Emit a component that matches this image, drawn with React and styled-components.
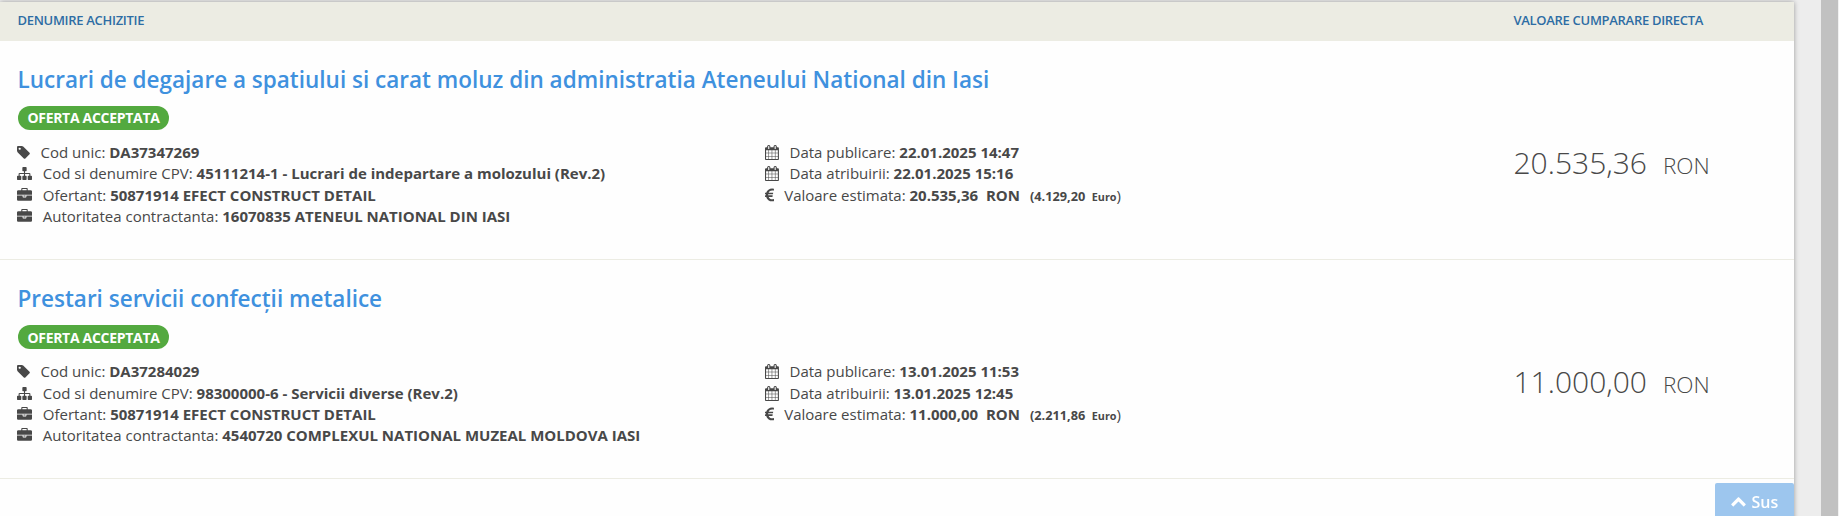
import React from "react";
import styled, { createGlobalStyle } from "styled-components";

const GlobalStyle = createGlobalStyle`
  html, body { margin: 0; height: 516px; overflow: hidden; }
  body {
    font-family: "Open Sans", "Noto Sans", sans-serif;
    font-size: 15px;
    line-height: 21.43px;
    color: #484848;
    background: #ededed;
  }
  * { box-sizing: border-box; }
`;

const Page = styled.div`
  display: flex;
  justify-content: space-between;
  height: 516px;
  padding-top: 2px;
  background: #ededed;
  overflow: hidden;
`;

const Panel = styled.main`
  width: 1794px;
  height: 520px;
  background: #fefefe;
  box-shadow: 0 0 5px rgba(0, 0, 0, 0.35);
`;

const ScrollTrack = styled.div`
  width: 18px;
  height: 516px;
  margin-top: -2px;
  padding-right: 1px;
  background: #f1f1f1;
`;

const ScrollThumb = styled.div`
  height: 100%;
  background: #c1c1c1;
`;

const columns = "748px 748px 1fr";

const Header = styled.header`
  display: grid;
  grid-template-columns: ${columns};
  height: 39px;
  padding: 8px 0 0 17.5px;
  background: #ecece3;
  color: #2e6da4;
  font-size: 13px;
  font-weight: 600;
  line-height: 21px;
  letter-spacing: -0.3px;
`;

const HeaderCell = styled.div`
  grid-column: ${(p) => p.$col};
`;

const Item = styled.article`
  height: 219.23px;
  padding: 25px 0 0 17.5px;
  border-bottom: 1px solid #ecece3;
`;

const Title = styled.h2`
  margin: 0;
  height: 33px;
  font-size: 22.5px;
  line-height: 27px;
  font-weight: 600;
  color: #3f91de;
  white-space: nowrap;
`;

const Badge = styled.span`
  display: flex;
  align-items: center;
  justify-content: center;
  width: 151px;
  height: 24px;
  margin: 7px 0 12px 0.5px;
  border-radius: 12px;
  background: #53a93f;
  color: #fff;
  font-size: 14px;
  font-weight: 700;
  letter-spacing: -0.3px;
  white-space: nowrap;
`;

const Details = styled.div`
  display: grid;
  grid-template-columns: ${columns};
`;

const Line = styled.div`
  display: flex;
  height: 21.43px;
  white-space: pre;
`;

const IconBox = styled.span`
  width: ${(p) => p.$width}px;
  flex: none;
`;

const Glyph = styled.svg`
  display: block;
  width: ${(p) => p.$w}px;
  height: 15px;
  margin: 3px 0 0 -0.5px;
  fill: currentColor;
`;

const Small = styled.span`
  font-size: ${(p) => p.$size}px;
  font-weight: 700;
  margin-left: ${(p) => p.$gap}px;
`;

const Price = styled.div`
  display: flex;
  align-items: baseline;
  gap: 16px;
  height: 40px;
  font-size: 30px;
  font-weight: 300;
  line-height: 40px;
  margin-top: 1.2px;
  white-space: nowrap;
`;

const Currency = styled.span`
  font-size: 22.5px;
`;

const TopButton = styled.button`
  position: fixed;
  left: 1715px;
  top: 483px;
  display: flex;
  gap: 5px;
  width: 79px;
  height: 40px;
  padding: 8px 0 0 16px;
  border: 0;
  border-radius: 2px;
  background: #9dc6ee;
  color: #fff;
  font: 600 16px/22px "Open Sans", sans-serif;
`;

const icons = {
  tag: {
    box: "0 128 1536 1536",
    w: 13,
    d: "M448 448q0-53-37.5-90.5t-90.5-37.5-90.5 37.5-37.5 90.5 37.5 90.5 90.5 37.5 90.5-37.5 37.5-90.5zm1067 576q0 53-37 90l-491 492q-39 37-91 37-53 0-90-37l-715-716q-38-37-64.5-101t-26.5-117v-416q0-52 38-90t90-38h416q53 0 117 26.5t102 64.5l715 714q37 39 37 91z",
  },
  sitemap: {
    box: "0 0 1792 1792",
    w: 15.4,
    d: "M1792 1248v320q0 40-28 68t-68 28h-320q-40 0-68-28t-28-68v-320q0-40 28-68t68-28h96v-192h-512v192h96q40 0 68 28t28 68v320q0 40-28 68t-68 28h-320q-40 0-68-28t-28-68v-320q0-40 28-68t68-28h96v-192h-512v192h96q40 0 68 28t28 68v320q0 40-28 68t-68 28h-320q-40 0-68-28t-28-68v-320q0-40 28-68t68-28h96v-192q0-52 38-90t90-38h512v-192h-96q-40 0-68-28t-28-68v-320q0-40 28-68t68-28h320q40 0 68 28t28 68v320q0 40-28 68t-68 28h-96v192h512q52 0 90 38t38 90v192h96q40 0 68 28t28 68z",
  },
  briefcase: {
    box: "0 0 1792 1792",
    w: 15.4,
    d: "M640 256h512v-128h-512v128zm1152 640v480q0 66-47 113t-113 47h-1472q-66 0-113-47t-47-113v-480h672v160q0 26 19 45t45 19h320q26 0 45-19t19-45v-160h672zm-768 0v128h-256v-128h256zm768-480v384h-1792v-384q0-66 47-113t113-47h352v-160q0-40 28-68t68-28h576q40 0 68 28t28 68v160h352q66 0 113 47t47 113z",
  },
  calendar: {
    box: "64 0 1664 1792",
    w: 14.4,
    d: "M192 1664h288v-288h-288v288zm352 0h320v-288h-320v288zm-352-352h288v-320h-288v320zm352 0h320v-320h-320v320zm-352-384h288v-288h-288v288zm736 736h320v-288h-320v288zm-384-736h320v-288h-320v288zm768 736h288v-288h-288v288zm-384-352h320v-320h-320v320zm-352-864v-288q0-13-9.5-22.5t-22.5-9.5h-64q-13 0-22.5 9.5t-9.5 22.5v288q0 13 9.5 22.5t22.5 9.5h64q13 0 22.5-9.5t9.5-22.5zm736 864h288v-320h-288v320zm-384-384h320v-288h-320v288zm384 0h288v-288h-288v288zm32-480v-288q0-13-9.5-22.5t-22.5-9.5h-64q-13 0-22.5 9.5t-9.5 22.5v288q0 13 9.5 22.5t22.5 9.5h64q13 0 22.5-9.5t9.5-22.5zm384-64v1280q0 52-38 90t-90 38h-1408q-52 0-90-38t-38-90v-1280q0-52 38-90t90-38h128v-96q0-66 47-113t113-47h64q66 0 113 47t47 113v96h384v-96q0-66 47-113t113-47h64q66 0 113 47t47 113v96h128q52 0 90 38t38 90z",
  },
  euro: {
    box: "384 128 1024 1536",
    w: 9.4,
    d: "M1360 1307l35 159q3 12-3 22.5t-17 14.5l-5 1q-4 2-10.5 3.5t-16 4.5-21.5 5.5-25.5 5-30 5-33.5 4.5-36.5 3-38.5 1q-234 0-409-130.5t-238-351.5h-95q-13 0-22.5-9.5t-9.5-22.5v-113q0-13 9.5-22.5t22.5-9.5h66q-2-57 1-105h-67q-14 0-23-9t-9-23v-114q0-14 9-23t23-9h98q67-210 243.5-338t400.5-128q102 0 194 23 11 3 20 15 6 11 3 24l-43 159q-3 13-14 19.5t-24 2.5l-4-1q-4-1-11.5-2.5l-17.5-3.5-22.5-3.5-26-3-29-2.5-29.5-1q-126 0-226 64t-150 176h468q16 0 25 12 10 12 7 26l-24 114q-5 26-32 26h-488q-3 37 0 105h459q15 0 25 12 9 12 6 27l-24 112q-2 11-11 18.5t-20 7.5h-387q48 117 149.5 185.5t228.5 68.5q18 0 36-1.5t33.5-3.5 29.5-4.5 24.5-5 18.5-4.5l12-3 5-2q13-5 26 2 12 7 15 21z",
  },
  up: {
    box: "64 128 1664 1664",
    w: 16,
    d: "M1683 1331l-166 165q-19 19-45 19t-45-19l-531-531-531 531q-19 19-45 19t-45-19l-166-165q-19-19-19-45.5t19-45.5l742-741q19-19 45-19t45 19l742 741q19 19 19 45.5t-19 45.5z",
  },
};

function Icon({ name }) {
  const { box, w, d } = icons[name];
  return (
    <Glyph viewBox={box} $w={w} preserveAspectRatio="xMinYMid meet" aria-hidden="true">
      <path d={d} />
    </Glyph>
  );
}

function Detail({ icon, indent = 25.3, label, value, children }) {
  return (
    <Line>
      <IconBox $width={indent}>
        <Icon name={icon} />
      </IconBox>
      <span>
        {label}: <b>{value}</b>
        {children}
      </span>
    </Line>
  );
}

const acquisitions = [
  {
    title: "Lucrari de degajare a spatiului si carat moluz din administratia Ateneului National din Iasi",
    code: "DA37347269",
    cpv: "45111214-1 - Lucrari de indepartare a molozului (Rev.2)",
    authority: "16070835 ATENEUL NATIONAL DIN IASI",
    published: "22.01.2025 14:47",
    awarded: "22.01.2025 15:16",
    value: "20.535,36",
    euro: "4.129,20",
  },
  {
    title: "Prestari servicii confecții metalice",
    code: "DA37284029",
    cpv: "98300000-6 - Servicii diverse (Rev.2)",
    authority: "4540720 COMPLEXUL NATIONAL MUZEAL MOLDOVA IASI",
    published: "13.01.2025 11:53",
    awarded: "13.01.2025 12:45",
    value: "11.000,00",
    euro: "2.211,86",
  },
];

function Acquisition({ item }) {
  return (
    <Item>
      <Title>{item.title}</Title>
      <Badge>OFERTA ACCEPTATA</Badge>
      <Details>
        <div>
          <Detail icon="tag" indent={23} label="Cod unic" value={item.code} />
          <Detail icon="sitemap" label="Cod si denumire CPV" value={item.cpv} />
          <Detail icon="briefcase" label="Ofertant" value="50871914 EFECT CONSTRUCT DETAIL" />
          <Detail icon="briefcase" label="Autoritatea contractanta" value={item.authority} />
        </div>
        <div>
          <Detail icon="calendar" indent={24} label="Data publicare" value={item.published} />
          <Detail icon="calendar" indent={24} label="Data atribuirii" value={item.awarded} />
          <Detail icon="euro" indent={18.7} label="Valoare estimata" value={`${item.value}  RON`}>
            <Small $size={12.75} $gap={10}>({item.euro}</Small>
            <Small $size={10.8} $gap={6.5}>Euro</Small>)
          </Detail>
        </div>
        <Price>
          {item.value}
          <Currency>RON</Currency>
        </Price>
      </Details>
    </Item>
  );
}

export default function App() {
  return (
    <>
      <GlobalStyle />
      <Page>
        <Panel>
          <Header>
            <HeaderCell $col={1}>DENUMIRE ACHIZITIE</HeaderCell>
            <HeaderCell $col={3}>VALOARE CUMPARARE DIRECTA</HeaderCell>
          </Header>
          {acquisitions.map((item) => (
            <Acquisition key={item.code} item={item} />
          ))}
        </Panel>
        <ScrollTrack>
          <ScrollThumb />
        </ScrollTrack>
      </Page>
      <TopButton>
        <Icon name="up" />
        Sus
      </TopButton>
    </>
  );
}
